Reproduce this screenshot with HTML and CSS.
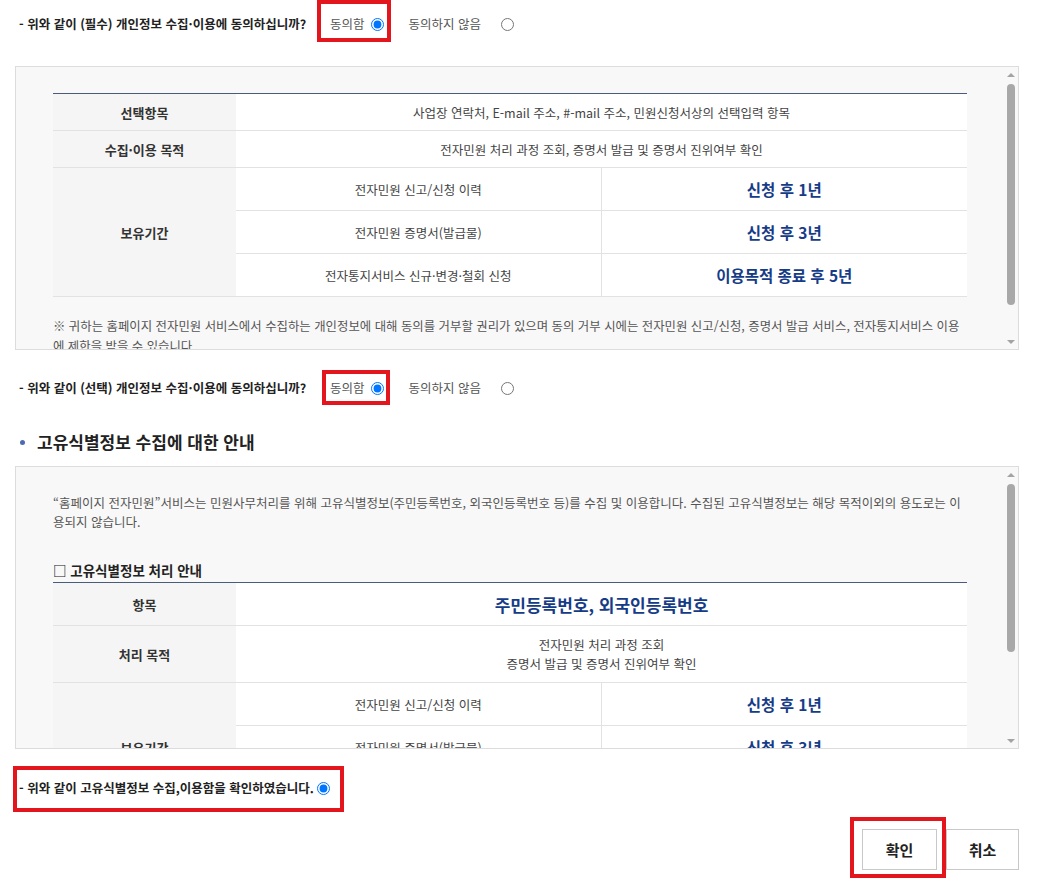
FILE: index.html
```html
<!DOCTYPE html>
<html lang="ko">
<head>
<meta charset="utf-8">
<title>개인정보 수집·이용 동의</title>
<link rel="stylesheet" href="styles.css">
</head>
<body>
<div class="page">
  <div class="q-row">
    <span class="q-text">- 위와 같이 (필수) 개인정보 수집·이용에 동의하십니까?</span>
    <label class="opt mark mark--a"><span>동의함</span><input type="radio" name="req" checked></label>
    <label class="opt opt--no opt--no-a"><span>동의하지 않음</span><input type="radio" name="req"></label>
  </div>

  <div class="scroll-box scroll-box--first">
    <div class="scroll-content">
      <table class="info-table">
        <colgroup><col class="c-head"><col class="c-mid"><col class="c-right"></colgroup>
        <tr class="row-s">
          <th>선택항목</th>
          <td colspan="2">사업장 연락처, E-mail 주소, #-mail 주소, 민원신청서상의 선택입력 항목</td>
        </tr>
        <tr class="row-s">
          <th>수집·이용 목적</th>
          <td colspan="2">전자민원 처리 과정 조회, 증명서 발급 및 증명서 진위여부 확인</td>
        </tr>
        <tr class="row-l">
          <th rowspan="3">보유기간</th>
          <td>전자민원 신고/신청 이력</td>
          <td class="em">신청 후 1년</td>
        </tr>
        <tr class="row-l">
          <td>전자민원 증명서(발급물)</td>
          <td class="em">신청 후 3년</td>
        </tr>
        <tr class="row-l">
          <td>전자통지서비스 신규·변경·철회 신청</td>
          <td class="em">이용목적 종료 후 5년</td>
        </tr>
      </table>
      <p class="note">※ 귀하는 홈페이지 전자민원 서비스에서 수집하는 개인정보에 대해 동의를 거부할 권리가 있으며 동의 거부 시에는 전자민원 신고/신청, 증명서 발급 서비스, 전자통지서비스 이용에 제한을 받을 수 있습니다.</p>
    </div>
    <div class="scrollbar">
      <span class="sb-btn sb-up"></span>
      <div class="sb-track"><div class="sb-thumb sb-thumb--first"></div></div>
      <span class="sb-btn sb-down"></span>
    </div>
  </div>

  <div class="q-row q-row--second">
    <span class="q-text">- 위와 같이 (선택) 개인정보 수집·이용에 동의하십니까?</span>
    <label class="opt mark mark--b"><span>동의함</span><input type="radio" name="opt" checked></label>
    <label class="opt opt--no opt--no-b"><span>동의하지 않음</span><input type="radio" name="opt"></label>
  </div>

  <h2 class="section-title"><span class="bullet"></span>고유식별정보 수집에 대한 안내</h2>

  <div class="scroll-box scroll-box--second">
    <div class="scroll-content">
      <p class="desc">“홈페이지 전자민원”서비스는 민원사무처리를 위해 고유식별정보(주민등록번호, 외국인등록번호 등)를 수집 및 이용합니다. 수집된 고유식별정보는 해당 목적이외의 용도로는 이용되지 않습니다.</p>
      <h3 class="sub-title">□ 고유식별정보 처리 안내</h3>
      <table class="info-table">
        <colgroup><col class="c-head"><col class="c-mid"><col class="c-right"></colgroup>
        <tr class="row-l">
          <th>항목</th>
          <td colspan="2" class="em em--lg">주민등록번호, 외국인등록번호</td>
        </tr>
        <tr class="row-xl">
          <th>처리 목적</th>
          <td colspan="2" class="two-line">전자민원 처리 과정 조회<br>증명서 발급 및 증명서 진위여부 확인</td>
        </tr>
        <tr class="row-l">
          <th rowspan="3">보유기간</th>
          <td>전자민원 신고/신청 이력</td>
          <td class="em">신청 후 1년</td>
        </tr>
        <tr class="row-l">
          <td>전자민원 증명서(발급물)</td>
          <td class="em">신청 후 3년</td>
        </tr>
        <tr class="row-l">
          <td>전자통지서비스 신규·변경·철회 신청</td>
          <td class="em">이용목적 종료 후 5년</td>
        </tr>
      </table>
    </div>
    <div class="scrollbar">
      <span class="sb-btn sb-up"></span>
      <div class="sb-track"><div class="sb-thumb sb-thumb--second"></div></div>
      <span class="sb-btn sb-down"></span>
    </div>
  </div>

  <div class="confirm-row">
    <label class="confirm mark"><span>- 위와 같이 고유식별정보 수집,이용함을 확인하였습니다.</span><input type="radio" name="uid" checked></label>
  </div>

  <div class="btn-row">
    <div class="mark mark--btn"><button type="button" class="btn btn--ok">확인</button></div>
    <button type="button" class="btn btn--cancel">취소</button>
  </div>
</div>
</body>
</html>
```

FILE: styles.css
```css
* { box-sizing: border-box; }

html, body {
  margin: 0;
  padding: 0;
  background: #fff;
}

body {
  font-family: "Noto Sans CJK KR", "Noto Sans", sans-serif;
  font-size: 12px;
  color: #333;
}

.page {
  width: 1037px;
  padding: 0 18px 0 15px;
}

/* question rows */
.q-row {
  display: flex;
  align-items: baseline;
  padding-left: 4px;
}

.q-row--second {
  margin-top: 20px;
}

.q-text {
  width: 298px;
  font-size: 12.5px;
  font-weight: 700;
  color: #222;
  line-height: 16px;
  white-space: nowrap;
}

.opt {
  display: inline-flex;
  align-items: center;
  gap: 6px;
  font-size: 12.5px;
  line-height: 16px;
  color: #555;
  white-space: nowrap;
}

.opt input,
.confirm input {
  margin: 0;
  width: 13px;
  height: 13px;
}

.mark {
  border: 4px solid #e3161d;
}

.mark--a {
  padding: 12px 3px 6px 9px;
}

.mark--b {
  margin-left: 5px;
  padding: 6px 2px 5px 4px;
}

.opt--no {
  gap: 20px;
}

.opt--no-a { margin-left: 18px; }
.opt--no-b { margin-left: 19px; }

/* scroll boxes */
.scroll-box {
  display: flex;
  height: 284px;
  border: 1px solid #dcdcdc;
  background: #f8f8f8;
}

.scroll-box--first { margin-top: 24px; }

.scroll-box--second {
  margin-top: 13px;
  height: 283px;
}

.scroll-content {
  flex: 1;
  overflow: hidden;
  padding: 26px 36px 0 37px;
}

.scrollbar {
  width: 15px;
  display: flex;
  flex-direction: column;
  align-items: center;
}

.sb-btn {
  height: 15px;
  width: 15px;
  display: flex;
  align-items: center;
  justify-content: center;
}

.sb-btn::before {
  content: "";
  border-left: 4px solid transparent;
  border-right: 4px solid transparent;
}

.sb-up::before { border-bottom: 4px solid #a3a3a3; }
.sb-down::before { border-top: 4px solid #a3a3a3; }

.sb-track {
  flex: 1;
  padding-top: 2px;
}

.sb-thumb {
  width: 8px;
  border-radius: 4px;
  background: #a8a8a8;
}

.sb-thumb--first { height: 221px; }
.sb-thumb--second { height: 168px; }

/* tables */
.info-table {
  width: 914px;
  border-collapse: collapse;
  table-layout: fixed;
  border-top: 1px solid #4a5b7d;
  border-bottom: 1px solid #9c9c9c;
}

.c-head { width: 183px; }
.c-mid { width: 365px; }
.c-right { width: 366px; }

.info-table th {
  padding: 0;
  background: #f5f5f5;
  font-size: 13px;
  font-weight: 700;
  color: #333;
  text-align: center;
  border-bottom: 1px solid #e2e2e2;
}

.info-table td {
  padding: 0;
  background: #fff;
  font-size: 12.5px;
  color: #444;
  text-align: center;
  border-bottom: 1px solid #e2e2e2;
}

.info-table td + td {
  border-left: 1px solid #e2e2e2;
}

.row-s { height: 37px; }
.row-l { height: 43px; }
.row-xl { height: 57px; }

.info-table td.em {
  font-size: 15.5px;
  font-weight: 700;
  color: #163c88;
}

.info-table td.em--lg {
  font-size: 17px;
}

.two-line {
  line-height: 19px;
}

.note {
  margin: 19px 0 0;
  font-size: 12.4px;
  line-height: 20px;
  color: #555;
}

.desc {
  margin: 0;
  font-size: 12.5px;
  line-height: 19px;
  color: #555;
}

.sub-title {
  margin: 30px 0 3px;
  font-size: 13.5px;
  line-height: 18px;
  font-weight: 700;
  color: #222;
}

/* section heading */
.section-title {
  display: flex;
  align-items: center;
  margin: 26px 0 0;
  font-size: 17px;
  line-height: 22px;
  font-weight: 700;
  color: #222;
}

.bullet {
  width: 5px;
  height: 5px;
  border-radius: 50%;
  background: #4d6bb0;
  margin: 0 12px 0 5px;
}

/* confirm row */
.confirm-row {
  display: flex;
  margin-top: 17px;
  margin-left: -2px;
}

.confirm {
  display: inline-flex;
  align-items: center;
  gap: 3px;
  padding: 10px 10px 12px 2px;
  font-size: 12.5px;
  line-height: 16px;
  font-weight: 700;
  color: #222;
  white-space: nowrap;
}

/* buttons */
.btn-row {
  display: flex;
  justify-content: flex-end;
  align-items: flex-start;
  margin-top: 5px;
}

.mark--btn {
  padding: 8px 5px 4px 8px;
  border-width: 4px;
}

.btn {
  display: block;
  height: 41px;
  margin: 0;
  padding: 0;
  background: #fff;
  border: 1px solid #c8c8c8;
  font-family: inherit;
  font-size: 15px;
  font-weight: 700;
  color: #222;
}

.btn--ok { width: 75px; }

.btn--cancel {
  width: 73px;
  margin-top: 12px;
}
```
